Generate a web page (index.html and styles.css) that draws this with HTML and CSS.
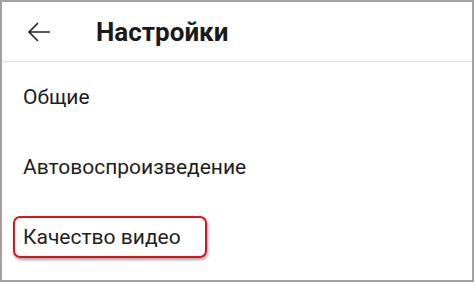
FILE: index.html
```html
<!DOCTYPE html>
<html lang="ru">
<head>
  <meta charset="UTF-8">
  <meta name="viewport" content="width=device-width, initial-scale=1.0">
  <title>Настройки</title>
  <link rel="stylesheet" href="styles.css">
</head>
<body>

  <div class="screen">
    <div class="top-bar">
      <span class="back-button">
        <svg width="26" height="22" viewBox="0 0 26 22">
          <path d="M24 11H3M12 2L3 11l9 9" fill="none" stroke="#222" stroke-width="1.6"/>
        </svg>
      </span>
      <h1>Настройки</h1>
    </div>
    <div class="settings-list">
      <div class="item">Общие</div>
      <div class="item">Автовоспроизведение</div>
      <div class="item">
        <span class="marked">Качество видео</span>
      </div>
    </div>
  </div>

</body>
</html>
```

FILE: styles.css
```css
/* Settings screen */
body {
  margin: 0;
  font-family: Roboto, "Noto Sans", Arial, sans-serif;
  background-color: #fff;
}

.screen {
  width: 474px;
  height: 282px;
  box-sizing: border-box;
  border: 2px solid #a2a2a2;
  background-color: #fff;
  overflow: hidden;
}

.top-bar {
  display: flex;
  align-items: center;
  height: 59px;
  border-bottom: 1px solid #e4e4e4;
  box-shadow: 0 1px 2px rgba(0, 0, 0, 0.05);
}

.back-button {
  display: flex;
  width: 26px;
  height: 22px;
  margin-left: 24px;
}

.top-bar h1 {
  margin: 0 0 0 44px;
  font-size: 26px;
  font-weight: bold;
  color: #1a1a1a;
}

.item {
  display: flex;
  align-items: center;
  height: 70px;
  padding-left: 21px;
  font-size: 21px;
  color: #1e1e1e;
}

.marked {
  display: flex;
  align-items: center;
  height: 38px;
  margin-left: -10px;
  padding: 0 24px 0 8px;
  border: 2px solid #e0101c;
  border-radius: 7px;
  box-shadow: 1px 2px 3px rgba(0, 0, 0, 0.35);
}
```
